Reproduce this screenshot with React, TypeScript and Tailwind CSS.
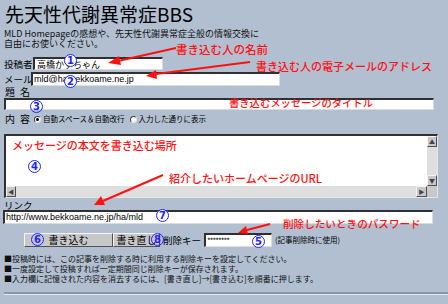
import React from "react";

const Circ = ({ n, cls }: { n: string; cls: string }) => (
  <div
    className={
      "absolute flex items-center justify-center w-[13px] h-[13px] rounded-full border-[1.5px] border-[#1f24ff] text-[#1f24ff] text-[10px] leading-[10px] font-bold font-['DejaVu_Sans',sans-serif] " +
      cls
    }
  >
    {n}
  </div>
);

const Radio = ({ on }: { on?: boolean }) => (
  <span className="inline-flex shrink-0 items-center justify-center w-[7px] h-[7px] rounded-full bg-white border border-t-[#404040] border-l-[#404040] border-r-[#e0e0e0] border-b-[#e0e0e0]">
    {on ? <span className="w-[3px] h-[3px] rounded-full bg-black" /> : null}
  </span>
);

const inset =
  "bg-white border-t-[2px] border-l-[2px] border-t-[#303030] border-l-[#303030] border-r border-b border-r-[#dcdcdc] border-b-[#dcdcdc]";

const Btn = ({ children, cls }: { children: React.ReactNode; cls: string }) => (
  <div
    className={
      "flex shrink-0 items-center justify-center h-[14px] bg-[#c8c8c8] border border-t-[#f4f4f4] border-l-[#f4f4f4] border-r-[#505050] border-b-[#505050] text-[10px] leading-[10px] whitespace-nowrap " +
      cls
    }
  >
    {children}
  </div>
);

export default function App() {
  return (
    <div className="relative w-[448px] h-[304px] overflow-hidden bg-[#b1bfd1] text-black font-['Noto_Sans_CJK_JP',sans-serif]">
      <div className="pl-[5px] pt-[3px] text-[19px] leading-[22px] whitespace-nowrap">先天性代謝異常症BBS</div>
      <div className="px-[4px] mt-[4px] text-[9px] leading-[10px] text-[#111] whitespace-nowrap">
        MLD Homepageの感想や、先天性代謝異常症全般の情報交換に
        <br />
        自由にお使いください。
      </div>

      <div className="px-[4px]">
        <div className="mt-[8px] flex items-center">
          <div className="w-[29px] shrink-0 whitespace-nowrap text-[9.5px] leading-[10px]">投稿者</div>
          <div className={"w-[130px] h-[13px] shrink-0 flex items-center pl-[2px] text-[9px] leading-[9px] whitespace-nowrap " + inset}>
            高橋かずちゃん
          </div>
        </div>
        <div className="mt-[2px] flex items-center">
          <div className="w-[27px] shrink-0 whitespace-nowrap text-[9.5px] leading-[10px]">メール</div>
          <div className={"w-[249px] h-[14px] shrink-0 flex items-center pl-[1px] text-[9px] leading-[9px] whitespace-nowrap font-['Liberation_Sans',sans-serif] " + inset}>
            mld@ha.bekkoame.ne.jp
          </div>
        </div>
        <div className="mt-[1px] flex gap-[5px] text-[10px] leading-[10px] pl-[1px]">
          <span>題</span>
          <span>名</span>
        </div>
        <div className={"mt-[1px] w-[430px] h-[12px] " + inset} />
        <div className="mt-[3px] flex items-center h-[12px] pl-[1px] whitespace-nowrap">
          <div className="flex gap-[5px] text-[10px] leading-[10px] w-[29px] shrink-0">
            <span>内</span>
            <span>容</span>
          </div>
          <Radio on />
          <span className="ml-[2px] text-[7.5px] leading-[8px]">自動スペース＆自動改行</span>
          <span className="ml-[5px] flex">
            <Radio />
          </span>
          <span className="ml-[2px] text-[7.5px] leading-[8px]">入力した通りに表示</span>
        </div>

        <div className="mt-[9px] w-[434px] h-[64px] bg-white border-t-[2px] border-l-[2px] border-t-[#303030] border-l-[#303030] border-r border-b border-r-[#e6e6e6] border-b-[#e6e6e6] flex flex-col">
          <div className="flex flex-1">
            <div className="flex-1" />
            <div className="w-[10px] flex flex-col bg-[#dedede]">
              <div className="h-[11px] bg-[#c8c8c8] border border-t-[#f4f4f4] border-l-[#f4f4f4] border-r-[#505050] border-b-[#505050] flex items-center justify-center text-[6px] leading-[6px] text-[#444]">▲</div>
              <div className="flex-1" />
              <div className="h-[11px] bg-[#c8c8c8] border border-t-[#f4f4f4] border-l-[#f4f4f4] border-r-[#505050] border-b-[#505050] flex items-center justify-center text-[6px] leading-[6px] text-[#444]">▼</div>
            </div>
          </div>
          <div className="h-[11px] flex bg-[#dedede]">
            <div className="w-[10px] bg-[#c8c8c8] border border-t-[#f4f4f4] border-l-[#f4f4f4] border-r-[#505050] border-b-[#505050] flex items-center justify-center text-[6px] leading-[6px] text-[#444]">◀</div>
            <div className="flex-1" />
            <div className="w-[11px] bg-[#c8c8c8] border border-t-[#f4f4f4] border-l-[#f4f4f4] border-r-[#505050] border-b-[#505050] flex items-center justify-center text-[6px] leading-[6px] text-[#444]">▶</div>
            <div className="w-[10px] bg-[#c8c8c8]" />
          </div>
        </div>

        <div className="mt-[2px] text-[9.5px] leading-[10px]">リンク</div>
        <div className={"-ml-[1px] w-[430px] h-[14px] flex items-center pl-[1px] text-[9px] leading-[9px] whitespace-nowrap font-['Liberation_Sans',sans-serif] " + inset}>
          http://www.bekkoame.ne.jp/ha/mld
        </div>

        <div className="mt-[9px] ml-[20px] flex items-center whitespace-nowrap">
          <Btn cls="w-[89px]">書き込む</Btn>
          <Btn cls="w-[47px]">書き直し</Btn>
          <div className="ml-[3px] text-[9.5px] leading-[10px]">削除キー</div>
          <div className={"ml-[3px] w-[68px] h-[14px] shrink-0 flex items-center pl-[1px] text-[8px] leading-[8px] tracking-[-1px] " + inset}>
            ********
          </div>
          <div className="ml-[3px] text-[7.5px] leading-[8px]">(記事削除時に使用)</div>
        </div>

        <div className="mt-[7px] text-[8px] leading-[10px] text-[#111] whitespace-nowrap">
          <div>■投稿時には、この記事を削除する時に利用する削除キーを設定してください。</div>
          <div>■一度設定して投稿すれば一定期間同じ削除キーが保存されます。</div>
          <div>■入力欄に記憶された内容を消去するには、[書き直し]→[書き込む]を順番に押します。</div>
        </div>

        <div className="mt-[8px] -mr-[4px] border-t-[2px] border-t-[#8b97a8] border-b border-b-[#e2e8f0]" />
      </div>

      {/* annotations */}
      <svg className="absolute left-0 top-0" width="448" height="304" viewBox="0 0 448 304">
        <g stroke="#ff1010" strokeWidth="2" fill="#ff1010">
          <line x1="176" y1="48" x2="118" y2="61" />
          <polygon points="108,63 119,56 121,65" stroke="none" />
          <line x1="250" y1="62" x2="156" y2="74" />
          <polygon points="146,76 156,70 157,79" stroke="none" />
          <line x1="163" y1="175" x2="103" y2="201" />
          <polygon points="94,205 101,196 105,205" stroke="none" />
          <line x1="270" y1="224" x2="247" y2="230" />
          <polygon points="238,233 246,226 248,234" stroke="none" />
        </g>
      </svg>

      <div className="absolute left-[176px] top-[42px] whitespace-nowrap text-[11.5px] leading-[14px] font-medium text-[#ff1010]">書き込む人の名前</div>
      <div className="absolute left-[256px] top-[59px] whitespace-nowrap text-[11px] leading-[14px] font-medium text-[#ff1010]">書き込む人の電子メールのアドレス</div>
      <div className="absolute left-[229px] top-[96px] whitespace-nowrap text-[10.3px] leading-[13px] font-medium text-[#ff1010]">書き込むメッセージのタイトル</div>
      <div className="absolute left-[12px] top-[138px] whitespace-nowrap text-[11px] leading-[14px] font-medium text-[#ff1010]">メッセージの本文を書き込む場所</div>
      <div className="absolute left-[169px] top-[171px] whitespace-nowrap text-[11px] leading-[14px] font-medium text-[#ff1010]">紹介したいホームページのURL</div>
      <div className="absolute left-[283px] top-[217px] whitespace-nowrap text-[10.6px] leading-[14px] font-medium text-[#ff1010]">削除したいときのパスワード</div>

      <Circ n="1" cls="left-[64px] top-[54px] bg-white" />
      <Circ n="2" cls="left-[64px] top-[75px] bg-white" />
      <Circ n="3" cls="left-[30px] top-[100px]" />
      <Circ n="4" cls="left-[28px] top-[160px]" />
      <Circ n="5" cls="left-[252px] top-[235px] bg-white" />
      <Circ n="6" cls="left-[31px] top-[233px]" />
      <Circ n="7" cls="left-[156px] top-[209px] bg-white" />
      <Circ n="8" cls="left-[151px] top-[233px]" />
    </div>
  );
}
